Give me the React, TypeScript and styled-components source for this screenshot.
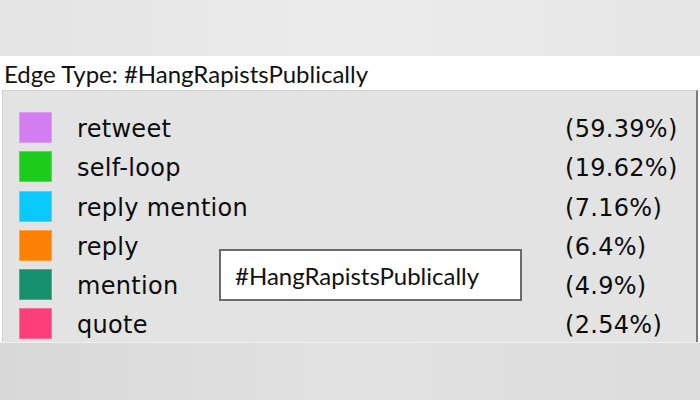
import React from "react";
import styled, { createGlobalStyle } from "styled-components";

const Global = createGlobalStyle`
  html, body { margin: 0; padding: 0; background: #ffffff; }
  body { width: 700px; height: 400px; overflow: hidden; }
`;

const Page = styled.div`
  width: 700px;
  height: 400px;
  display: flex;
  flex-direction: column;
  background: #ffffff;
`;

const TopBand = styled.div`
  height: 56px;
  background: linear-gradient(90deg, #e4e4e4 0%, #ececec 50%, #e6e6e6 100%);
`;

const TitleBar = styled.div`
  height: 34px;
  display: flex;
  align-items: flex-end;
  padding-left: 4px;
  font-family: Lato, "Open Sans", sans-serif;
  font-size: 24px;
  color: #111;
  line-height: 30px;
  box-sizing: border-box;
  padding-bottom: 1px;
`;

const PanelWrap = styled.div`
  height: 252px;
  padding: 0 2px 0 2px;
  background: #ffffff;
  display: flex;
`;

const Panel = styled.div`
  position: relative;
  flex: 1;
  background: #e3e3e3;
  border-top: 1px solid #cfcfcf;
  border-left: 1px solid #d2d2d2;
  border-right: 2px solid #7a7a7a;
  padding: 21px 0 0 16px;
  box-sizing: border-box;
  display: flex;
  flex-direction: column;
  gap: 8.3px;
`;

const Row = styled.div`
  display: grid;
  grid-template-columns: 33px 463px auto;
  grid-template-rows: 31px;
  column-gap: 25px;
  align-items: center;
  height: 31px;
`;

const Swatch = styled.div<{ $c: string }>`
  width: 33px;
  height: 31px;
  background: ${(p) => p.$c};
  box-shadow: inset 0 0 0 1px rgba(255, 255, 255, 0.25);
`;

const Label = styled.span`
  font-family: "DejaVu Sans", Verdana, sans-serif;
  font-size: 24px;
  letter-spacing: 0.3px;
  color: #0c0c0c;
  height: 31px;
  box-sizing: border-box;
  line-height: 27px;
  padding-top: 4px;
  white-space: nowrap;
`;

const Pct = styled(Label)``;

const Tooltip = styled.div`
  position: absolute;
  left: 216px;
  top: 158px;
  width: 303px;
  height: 52px;
  box-sizing: border-box;
  background: #ffffff;
  border: 2px solid #6a6a6a;
  display: flex;
  align-items: center;
  padding-left: 14px;
  font-family: Lato, "Open Sans", sans-serif;
  font-size: 24px;
  color: #111;
`;

const BottomBand = styled.div`
  flex: 1;
  background: linear-gradient(90deg, #d8d8d8 0%, #e2e2e2 50%, #dcdcdc 100%);
  border-top: 1px solid #f0f0f0;
`;

const rows = [
  { c: "#d07ef0", l: "retweet", p: "(59.39%)" },
  { c: "#1ccd1c", l: "self-loop", p: "(19.62%)" },
  { c: "#0cc9fb", l: "reply mention", p: "(7.16%)" },
  { c: "#fb8004", l: "reply", p: "(6.4%)" },
  { c: "#16906c", l: "mention", p: "(4.9%)" },
  { c: "#fc3f7a", l: "quote", p: "(2.54%)" },
];

export default function App() {
  return (
    <Page>
      <Global />
      <TopBand />
      <TitleBar>Edge Type: #HangRapistsPublically</TitleBar>
      <PanelWrap>
        <Panel>
          {rows.map((r) => (
            <Row key={r.l}>
              <Swatch $c={r.c} />
              <Label>{r.l}</Label>
              <Pct>{r.p}</Pct>
            </Row>
          ))}
          <Tooltip>#HangRapistsPublically</Tooltip>
        </Panel>
      </PanelWrap>
      <BottomBand />
    </Page>
  );
}
